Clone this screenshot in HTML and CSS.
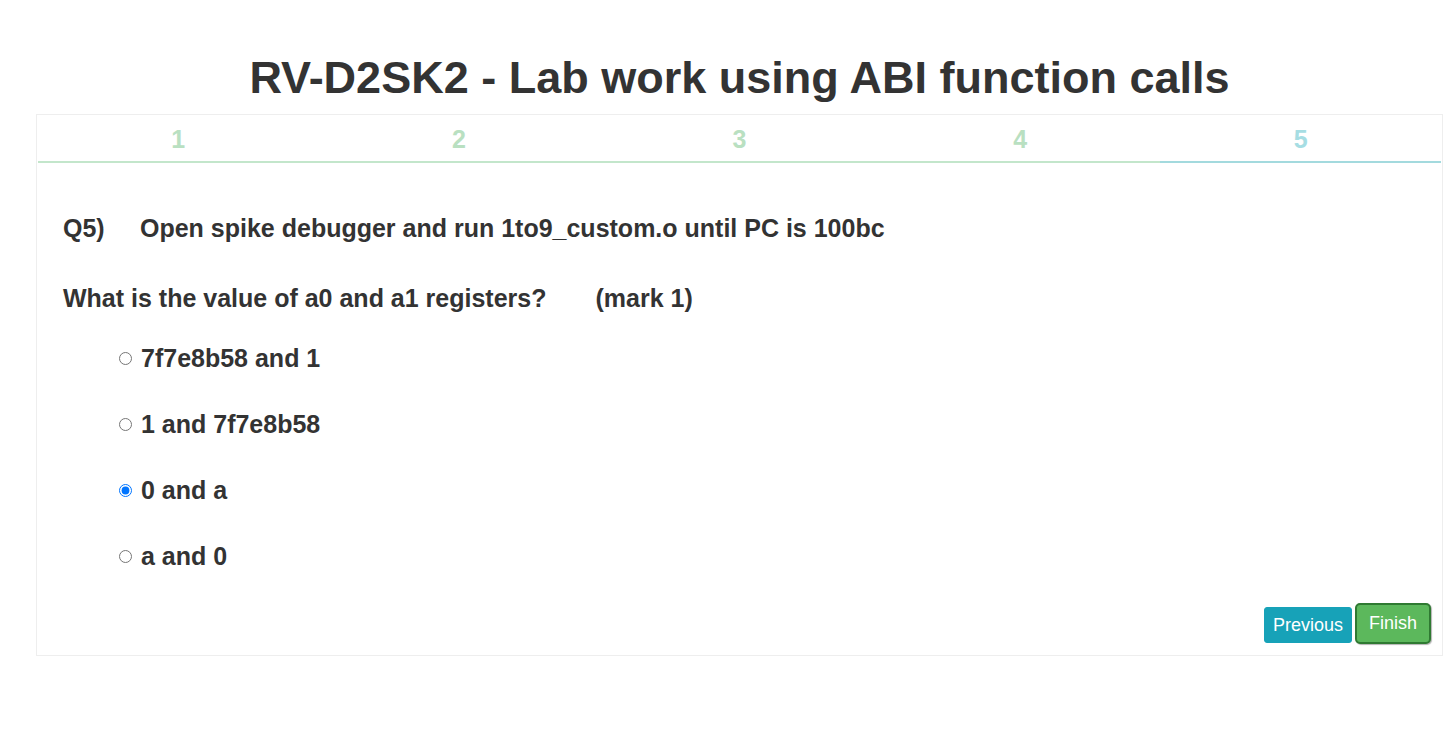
FILE: index.html
```html
<!DOCTYPE html>
<html>
<head>
<meta charset="utf-8">
<link rel="stylesheet" href="styles.css">
</head>
<body>
<div class="wrap">
  <h1 class="title">RV-D2SK2 - Lab work using ABI function calls</h1>
  <div class="panel">
    <div class="tabs">
      <div class="tab done">1</div>
      <div class="tab done">2</div>
      <div class="tab done">3</div>
      <div class="tab done">4</div>
      <div class="tab current">5</div>
    </div>
    <div class="body">
      <p class="q"><span class="qn">Q5)</span><span>Open spike debugger and run 1to9_custom.o until PC is 100bc</span></p>
      <p class="ask"><span>What is the value of a0 and a1 registers?</span><span class="mark">(mark 1)</span></p>
      <ul class="opts">
        <li><label><input type="radio" name="q5"> 7f7e8b58 and 1</label></li>
        <li><label><input type="radio" name="q5"> 1 and 7f7e8b58</label></li>
        <li><label><input type="radio" name="q5" checked> 0 and a</label></li>
        <li><label><input type="radio" name="q5"> a and 0</label></li>
      </ul>
      <div class="actions">
        <button class="btn prev">Previous</button>
        <button class="btn finish">Finish</button>
      </div>
    </div>
  </div>
</div>
</body>
</html>
```
FILE: styles.css
```css
html, body {
  margin: 0;
  padding: 0;
  background: #fff;
}
body {
  font-family: "Liberation Sans", Arial, sans-serif;
  color: #333;
}
.wrap {
  margin-left: 36px;
  width: 1407px;
  padding-top: 52px;
}
.title {
  margin: 0;
  text-align: center;
  font-size: 45px;
  font-weight: bold;
  line-height: 52px;
  height: 62px;
  color: #333;
}
.panel {
  border: 1px solid #eee;
  height: 542px;
  box-sizing: border-box;
  display: flex;
  flex-direction: column;
}
.tabs {
  display: flex;
  margin: 0 1px;
}
.tab {
  flex: 1;
  text-align: center;
  font-size: 25px;
  font-weight: bold;
  height: 46px;
  line-height: 48px;
  border-bottom: 2px solid #c3e6cb;
  color: #b9e0c1;
}
.tab.current {
  color: #a6dde3;
  border-bottom-color: #a3dade;
}
.body {
  flex: 1;
  display: flex;
  flex-direction: column;
  padding: 0 11px 0 26px;
}
.q, .ask {
  margin: 0;
  font-size: 25px;
  font-weight: bold;
  display: flex;
}
.q {
  margin-top: 51px;
  line-height: 28px;
}
.qn {
  width: 77px;
}
.ask {
  margin-top: 42px;
  line-height: 28px;
}
.mark {
  margin-left: 49px;
}
.opts {
  list-style: none;
  margin: 32px 0 0 0;
  padding: 0 0 0 56px;
  display: flex;
  flex-direction: column;
  gap: 38px;
}
.opts li {
  font-size: 25px;
  font-weight: bold;
  line-height: 28px;
}
.opts label {
  display: flex;
  align-items: center;
}
.opts input {
  margin: 0 9px 0 0;
  width: 13px;
  height: 13px;
}
.actions {
  margin-top: auto;
  margin-bottom: 11px;
  display: flex;
  justify-content: flex-end;
  align-items: flex-end;
  gap: 3px;
}
.btn {
  font-family: "Liberation Sans", Arial, sans-serif;
  font-size: 18px;
  color: #fff;
  border: 1px solid transparent;
  border-radius: 3px;
  padding: 0 8px;
  height: 36px;
  line-height: 32px;
  cursor: pointer;
}
.prev {
  background: #17a2b8;
  border-color: #17a2b8;
  margin-bottom: 1px;
}
.finish {
  background: #5cb85c;
  border: 2px solid #2f7a32;
  border-radius: 5px;
  height: 41px;
  padding: 0 12px;
  line-height: 37px;
  box-shadow: 1px 1px 1px rgba(0,0,0,0.3);
}
```
